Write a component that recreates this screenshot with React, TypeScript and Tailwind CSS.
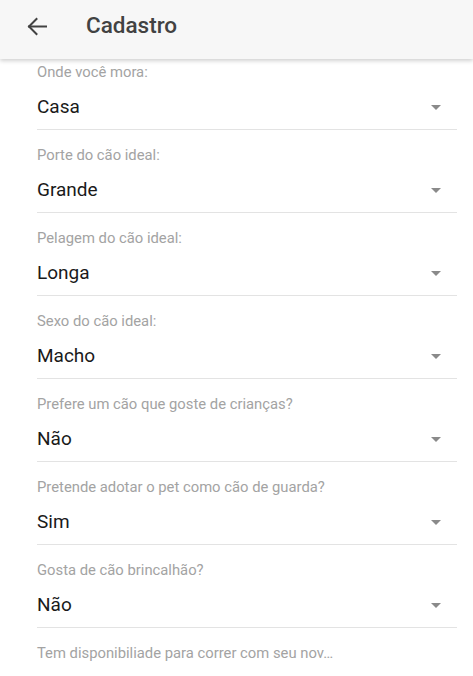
import React from 'react';

const fields = [
    { label: 'Onde você mora:', value: 'Casa' },
    { label: 'Porte do cão ideal:', value: 'Grande' },
    { label: 'Pelagem do cão ideal:', value: 'Longa' },
    { label: 'Sexo do cão ideal:', value: 'Macho' },
    { label: 'Prefere um cão que goste de crianças?', value: 'Não' },
    { label: 'Pretende adotar o pet como cão de guarda?', value: 'Sim' },
    { label: 'Gosta de cão brincalhão?', value: 'Não' },
];

function SelectField({ label, value }: { label: string; value: string }) {
    return (
        <div className="ml-[37px] mr-[16px] pt-[17px] pb-[10px] border-b border-[#e3e3e3]">
            <div className="text-[14.8px] leading-[17px] text-[#a3a3a3]">{label}</div>
            <div className="mt-[14px] flex items-center justify-between">
                <span className="text-[19px] leading-[24px] text-[#1a1a1a]">{value}</span>
                <span className="mr-[16px] w-0 h-0 border-l-[5px] border-r-[5px] border-t-[5px] border-l-transparent border-r-transparent border-t-[#8a8a8a]" />
            </div>
        </div>
    );
}

export default function App() {
    return (
        <div className="w-[473px] h-[676px] overflow-hidden bg-white font-['Roboto',sans-serif]">
            <header className="relative z-10 h-[59px] bg-[#f7f7f7] shadow-[0_2px_4px_rgba(0,0,0,0.18)] flex items-start pt-[12px]">
                <svg className="ml-[27px] mt-[5px]" width="20" height="19" viewBox="0 0 20 19" fill="none" stroke="#424242" strokeWidth="2" strokeLinecap="square">
                    <path d="M2 9.5H19" />
                    <path d="M9.5 2L2 9.5L9.5 17" />
                </svg>
                <h1 className="ml-[39px] text-[22.5px] leading-[26px] font-medium text-[#424242]">Cadastro</h1>
            </header>

            <div className="-mt-[12px]">
                {fields.map((field, i) => (
                    <SelectField key={i} label={field.label} value={field.value} />
                ))}
                <div className="ml-[37px] mr-[16px] pt-[17px]">
                    <div className="text-[14.8px] leading-[17px] text-[#a3a3a3]">
                        Tem disponibiliade para correr com seu nov…
                    </div>
                </div>
            </div>
        </div>
    );
}
